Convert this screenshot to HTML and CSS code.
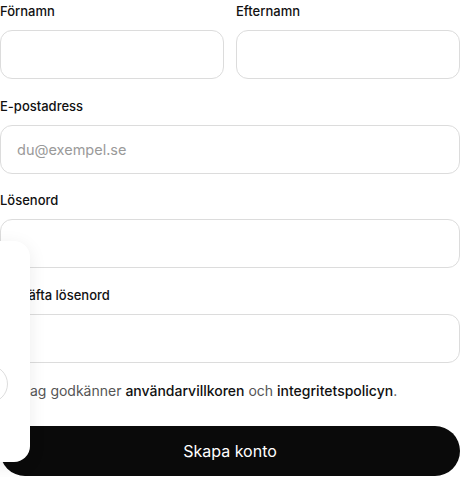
FILE: index.html
```html
<!DOCTYPE html>
<html lang="sv">
<head>
    <meta charset="UTF-8">
    <meta name="viewport" content="width=device-width, initial-scale=1.0">
    <title>Skapa konto</title>
    <link rel="stylesheet" href="styles.css">
</head>
<body>

    <form class="signup-form">
        <div class="name-row">
            <div class="field">
                <label for="first-name">Förnamn</label>
                <input type="text" id="first-name">
            </div>
            <div class="field">
                <label for="last-name">Efternamn</label>
                <input type="text" id="last-name">
            </div>
        </div>

        <div class="field">
            <label for="email">E-postadress</label>
            <input type="email" id="email" placeholder="du@exempel.se">
        </div>

        <div class="field">
            <label for="password">Lösenord</label>
            <input type="password" id="password">
        </div>

        <div class="field">
            <label for="confirm">Bekräfta lösenord</label>
            <input type="password" id="confirm">
        </div>

        <label class="terms">
            <input type="checkbox" class="terms-box">
            <span>Jag godkänner <a href="#">användarvillkoren</a> och <a href="#">integritetspolicyn</a>.</span>
        </label>

        <button type="submit" class="submit-btn">Skapa konto</button>
    </form>

    <!-- side panel sliding in from the left -->
    <div class="side-panel">
        <span class="panel-dot"></span>
    </div>

</body>
</html>
```

FILE: styles.css
```css
/* General Styles */
* {
    margin: 0;
    padding: 0;
    box-sizing: border-box;
}

body {
    font-family: Inter, "Noto Sans", sans-serif;
    background-color: #ffffff;
    color: #111111;
    overflow: hidden;
}

.signup-form {
    width: 460px;
    display: flex;
    flex-direction: column;
    gap: 15.67px;
}

.name-row {
    display: grid;
    grid-template-columns: minmax(0, 1fr) minmax(0, 1fr);
    gap: 12px;
}

.field {
    display: flex;
    flex-direction: column;
}

.field label {
    font-size: 13px;
    font-weight: 500;
    line-height: 22px;
    margin-bottom: 8px;
}

.field input {
    width: 100%;
    height: 49px;
    padding: 0 16px;
    font-family: inherit;
    font-size: 14.5px;
    color: #111111;
    border: 1px solid #dcdcdc;
    border-radius: 12px;
    background: #ffffff;
    outline: none;
}

.field input::placeholder {
    color: #9a9a9a;
}

.terms {
    display: flex;
    align-items: center;
    gap: 6px;
    font-size: 14px;
    color: #555555;
    height: 24px;
}

.terms-box {
    width: 16px;
    height: 16px;
}

.terms a {
    color: #111111;
    font-weight: 500;
    text-decoration: none;
}

.submit-btn {
    height: 50px;
    margin-top: 8px;
    background: #0a0a0a;
    color: #ffffff;
    border: none;
    border-radius: 25px;
    font-family: inherit;
    font-size: 16px;
    font-weight: 400;
    cursor: pointer;
}

.side-panel {
    position: absolute;
    top: 241px;
    left: -270px;
    width: 300px;
    height: 221px;
    background: #ffffff;
    border-radius: 16px;
    box-shadow: 0 4px 18px rgba(0, 0, 0, 0.08);
}

.panel-dot {
    position: absolute;
    top: 124px;
    right: 22px;
    width: 38px;
    height: 38px;
    border: 1px solid #dddddd;
    border-radius: 50%;
}
```
